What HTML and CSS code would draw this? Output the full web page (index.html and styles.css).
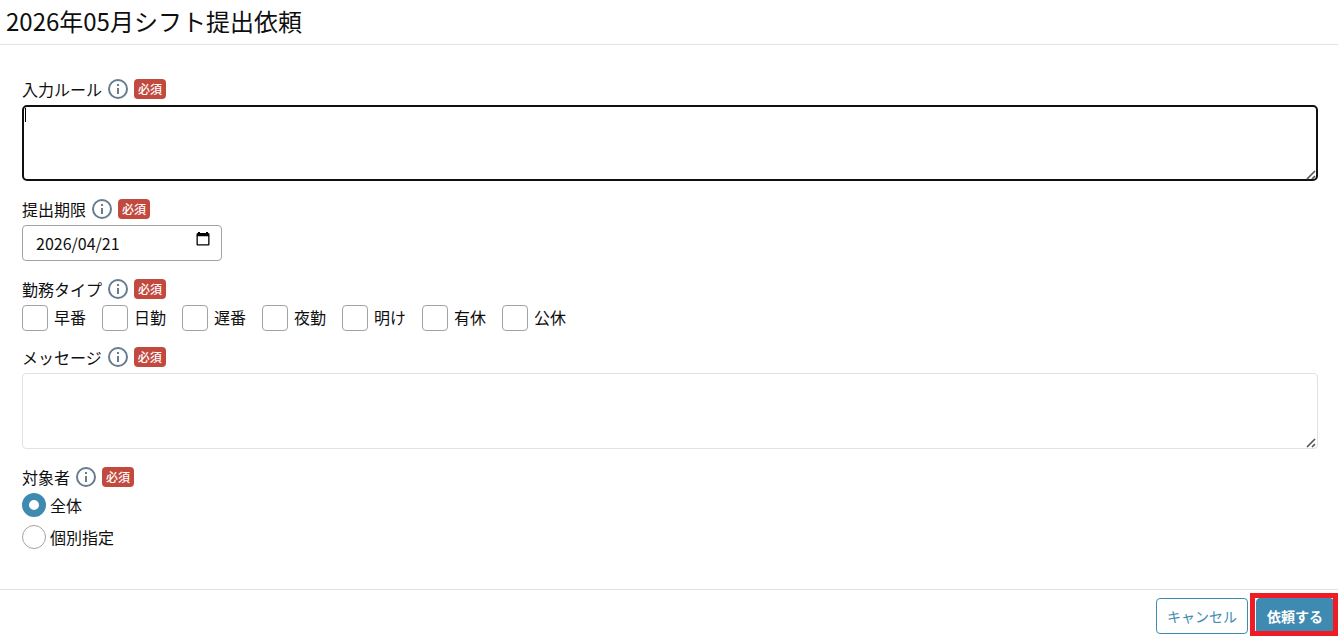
FILE: index.html
```html
<!DOCTYPE html>
<html lang="ja">
<head>
<meta charset="utf-8">
<meta name="viewport" content="width=device-width, initial-scale=1">
<title>2026年05月シフト提出依頼</title>
<link rel="stylesheet" href="styles.css">
</head>
<body>
<svg class="sprite" aria-hidden="true">
  <symbol id="info" viewBox="0 0 20 20">
    <circle cx="10" cy="10" r="9" fill="none" stroke="currentColor" stroke-width="2"/>
    <path d="M9 5h2v2H9zM9 9h2v6H9z" fill="currentColor"/>
  </symbol>
  <symbol id="grip" viewBox="0 0 10 10">
    <path d="M1 9L9 1M6 9L9 6" fill="none" stroke="currentColor" stroke-width="1.700"/>
  </symbol>
</svg>
<form class="dialog">
  <header class="dialog-header"><h1 class="title">2026年05月シフト提出依頼</h1></header>
  <main class="dialog-body">
    <div class="field">
      <div class="field-head"><label for="rule">入力ルール</label><svg class="info"><use href="#info"/></svg><span class="badge">必須</span></div>
      <div class="text-wrap"><textarea id="rule" class="textarea textarea-active"></textarea><span class="caret"></span><svg class="grip"><use href="#grip"/></svg></div>
    </div>
    <div class="field">
      <div class="field-head"><label for="limit">提出期限</label><svg class="info"><use href="#info"/></svg><span class="badge">必須</span></div>
      <div class="date">
        <input id="limit" class="date-input" type="text" value="2026/04/21">
        <button class="date-button" type="button" aria-label="カレンダー"><svg class="calendar" viewBox="0 0 14 14"><path d="M2 0h2v1h6V0h2v1q1.500 0 1.500 1v10.500q0 1-1 1h-11q-1 0-1-1V2q0-1 1.500-1zM1.800 4.200v8h10.400v-8z" fill="#000" fill-rule="evenodd"/></svg></button>
      </div>
    </div>
    <fieldset class="field">
      <legend class="field-head">勤務タイプ<svg class="info"><use href="#info"/></svg><span class="badge">必須</span></legend>
      <div class="checks">
        <label class="check"><input class="checkbox" type="checkbox">早番</label>
        <label class="check"><input class="checkbox" type="checkbox">日勤</label>
        <label class="check"><input class="checkbox" type="checkbox">遅番</label>
        <label class="check"><input class="checkbox" type="checkbox">夜勤</label>
        <label class="check"><input class="checkbox" type="checkbox">明け</label>
        <label class="check"><input class="checkbox" type="checkbox">有休</label>
        <label class="check"><input class="checkbox" type="checkbox">公休</label>
      </div>
    </fieldset>
    <div class="field">
      <div class="field-head"><label for="message">メッセージ</label><svg class="info"><use href="#info"/></svg><span class="badge">必須</span></div>
      <div class="text-wrap"><textarea id="message" class="textarea"></textarea><svg class="grip"><use href="#grip"/></svg></div>
    </div>
    <fieldset class="field">
      <legend class="field-head">対象者<svg class="info"><use href="#info"/></svg><span class="badge">必須</span></legend>
      <div class="radios">
        <label class="choice"><input class="radio" type="radio" name="target" checked>全体</label>
        <label class="choice"><input class="radio" type="radio" name="target">個別指定</label>
      </div>
    </fieldset>
  </main>
  <footer class="dialog-footer">
    <button class="button" type="button">キャンセル</button>
    <div class="highlight"><button class="button button-primary" type="button">依頼する</button></div>
  </footer>
</form>
</body>
</html>
```
FILE: styles.css
```css
* { box-sizing: border-box; }
body {
  margin: 0;
  background: #fff;
  color: #0f0f10;
  font: 16px/24px "Noto Sans CJK JP", sans-serif;
}
input, textarea, button { font: inherit; color: inherit; margin: 0; }
.sprite { display: none; }
.dialog { display: flex; flex-direction: column; }
.dialog-header { padding: 3px 6px 5px; border-bottom: 1px solid #e2e2e3; }
.title { margin: 0; font-size: 24px; line-height: 36px; font-weight: 400; }
.dialog-body {
  display: flex;
  flex-direction: column;
  gap: 16px;
  padding: 32px 20px 40px 22px;
}
.field { margin: 0; padding: 0; border: 0; min-width: 0; }
.field-head {
  display: flex;
  align-items: center;
  gap: 6px;
  margin-bottom: 4px;
  padding: 0;
}
.info { width: 20px; height: 20px; color: #687c90; }
.badge {
  padding: 0 4px;
  border-radius: 4px;
  background: #c2493d;
  color: #fff;
  font-size: 12px;
  line-height: 20px;
  font-weight: 500;
}
.textarea {
  display: block;
  width: 100%;
  height: 76px;
  padding: 2px;
  border: 1px solid #e2e2e3;
  border-radius: 4px;
  background: #fff;
  resize: vertical;
}
.textarea::-webkit-resizer { background: transparent; }
.textarea-active { border: 2px solid #101010; border-radius: 5px; }
.text-wrap { position: relative; }
.caret {
  position: absolute;
  left: 3px;
  top: 3px;
  width: 1px;
  height: 14px;
  background: #000;
}
.grip {
  position: absolute;
  right: 2px;
  bottom: 1px;
  width: 10px;
  height: 10px;
  color: #555;
  pointer-events: none;
}
.date {
  display: flex;
  width: 200px;
  height: 36px;
  padding: 0 11px 0 13px;
  border: 1px solid #a3a3a5;
  border-radius: 4px;
}
.date-input {
  flex: 1;
  min-width: 0;
  padding: 0;
  border: 0;
  background: none;
  outline: none;
}
.date-button {
  align-self: flex-start;
  padding: 6px 0 0;
  border: 0;
  background: none;
  line-height: 0;
}
.calendar { width: 14px; height: 14px; }
.checks { display: flex; flex-wrap: wrap; gap: 16px; }
.check { display: flex; gap: 6px; }
.checkbox {
  appearance: none;
  width: 26px;
  height: 26px;
  margin-bottom: -2px;
  border: 1px solid #a3a3a5;
  border-radius: 4px;
}
.checkbox:checked { background: #3e8ab0; }
.radios { display: flex; flex-direction: column; gap: 8px; }
.choice { display: flex; gap: 4px; }
.radio {
  appearance: none;
  width: 24px;
  height: 24px;
  border: 1px solid #a3a3a5;
  border-radius: 50%;
}
.radio:checked { border: 7px solid #3e8ab0; }
.dialog-footer {
  display: flex;
  justify-content: flex-end;
  gap: 8px;
  padding: 8px 4px 4px;
  border-top: 1px solid #e2e2e3;
}
.button {
  display: block;
  height: 36px;
  padding: 0 10px;
  border: 1px solid #3e8ab0;
  border-radius: 4px;
  background: #fff;
  color: #3e8ab0;
  font-size: 14px;
}
.button-primary { background: #3e8ab0; color: #fff; font-weight: 700; }
.highlight { position: relative; }
.highlight::after {
  content: "";
  position: absolute;
  inset: -5px -4px -2px -6px;
  border: 5px solid #ee1c25;
  pointer-events: none;
}
```
